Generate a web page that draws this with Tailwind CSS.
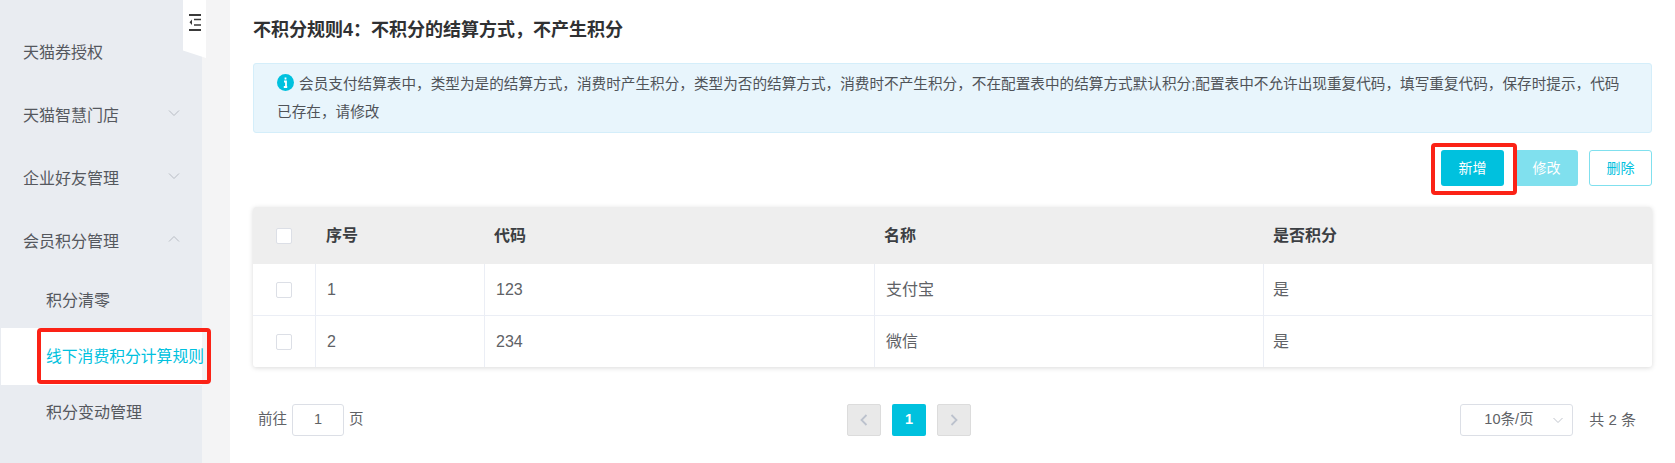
<!DOCTYPE html>
<html lang="zh-CN">

<head>
    <meta charset="UTF-8">
    <title>不积分规则</title>
    <script src="https://cdn.jsdelivr.net/npm/@tailwindcss/browser@4"></script>
</head>

<body>
    <main class="relative flex h-[463px] w-[1675px] overflow-hidden bg-white font-['Liberation_Sans','Noto_Sans_CJK_SC',sans-serif] text-[#606266]">
        <!-- sidebar -->
        <aside class="relative w-[202px] shrink-0 bg-[#e9ecf1] pt-[22px] text-[16px] text-[#55585e]">
            <div class="flex h-[62px] items-center pl-[23px]">天猫券授权</div>
            <div class="flex h-[64px] items-center justify-between pl-[23px] pr-[22px]">天猫智慧门店
                <svg class="mt-[-6px] h-[12px] w-[12px] text-[#b8bcc4]" viewBox="0 0 12 12" fill="none" stroke="currentColor"><path d="M1 3.500l5 5 5-5" /></svg>
            </div>
            <div class="flex h-[62px] items-center justify-between pl-[23px] pr-[22px]">企业好友管理
                <svg class="mt-[-6px] h-[12px] w-[12px] text-[#b8bcc4]" viewBox="0 0 12 12" fill="none" stroke="currentColor"><path d="M1 3.500l5 5 5-5" /></svg>
            </div>
            <div class="flex h-[63px] items-center justify-between pl-[23px] pr-[22px]">会员积分管理
                <svg class="mt-[-6px] h-[12px] w-[12px] text-[#b8bcc4]" viewBox="0 0 12 12" fill="none" stroke="currentColor"><path d="M1 8.500l5-5 5 5" /></svg>
            </div>
            <div class="flex h-[55px] items-center pl-[46px]">积分清零</div>
            <div class="ml-[1px] flex h-[57px] items-center whitespace-nowrap bg-white pl-[45px] text-[15.800px] text-[#00c1de]">线下消费积分计算规则</div>
            <div class="flex h-[55px] items-center pl-[46px]">积分变动管理</div>
        </aside>

        <!-- collapse toggle -->
        <div class="absolute left-[183px] top-0 flex h-[58px] w-[23px] justify-center bg-white pt-[14px] [clip-path:polygon(0_0,100%_0,100%_100%,0_87%)]">
            <svg class="h-[17px] w-[12px] text-[#3a3a3a]" viewBox="0 0 12 17" fill="none" stroke="currentColor">
                <path d="M0 1h12M0 16h12" stroke-width="2" />
                <path d="M5 5.500h7M5 11h7" stroke-width="1.500" />
                <path d="M3 5.500L.5 8.250 3 11z" fill="currentColor" stroke="none" />
            </svg>
        </div>

        <div class="w-[28px] shrink-0 bg-[#f4f4f5]"></div>

        <!-- content -->
        <section class="flex min-w-0 flex-1 flex-col pl-[23px] pr-[23px]">
            <h2 class="mt-[19px] h-[23px] text-[18px] font-bold leading-[23px] text-[#303133]">不积分规则4：不积分的结算方式，不产生积分</h2>

            <div class="mt-[21px] h-[70px] rounded-[3px] border border-[#d4eefa] bg-[#e8f5fc] px-[23px] pt-[6px] text-[14.640px] leading-[28px] text-[#4f5358]">
                <svg class="mr-[1px] inline-block h-[17px] w-[17px] align-[-2px]" viewBox="0 0 17 17">
                    <circle cx="8.500" cy="8.500" r="8.500" fill="#00c1de" />
                    <path d="M8.500 3.500v2M7 7.500h2v5.500M6.800 13h3.400" stroke="#fff" stroke-width="1.800" fill="none" />
                </svg>
                会员支付结算表中，类型为是的结算方式，消费时产生积分，类型为否的结算方式，消费时不产生积分，不在配置表中的结算方式默认积分;配置表中不允许出现重复代码，填写重复代码，保存时提示，代码已存在，请修改
            </div>

            <div class="mt-[17px] flex h-[36px] justify-end text-[14px]">
                <button class="h-[36px] w-[63px] rounded-[3px] bg-[#00c1de] text-white">新增</button>
                <button class="ml-[11px] h-[36px] w-[63px] rounded-[3px] bg-[#80e0ee] text-white">修改</button>
                <button class="ml-[11px] h-[36px] w-[63px] rounded-[3px] border border-[#80e0ee] bg-white text-[#00c1de]">删除</button>
            </div>

            <!-- table -->
            <div class="mt-[21px] rounded-[3px] shadow-[0_1px_5px_rgba(0,0,0,0.15)]">
                <div class="grid h-[57px] grid-cols-[63px_169px_390px_389px_1fr] items-center rounded-t-[3px] bg-[#eeeeee] text-[16px] font-bold text-[#3c3f43]">
                    <div class="flex pl-[23px]"><span class="h-[16px] w-[16px] rounded-[2px] border border-[#dcdfe6] bg-white"></span></div>
                    <div class="pl-[10px]">序号</div>
                    <div class="pl-[9px]">代码</div>
                    <div class="pl-[9px]">名称</div>
                    <div class="pl-[9px]">是否积分</div>
                </div>
                <div class="grid h-[52px] grid-cols-[63px_169px_390px_389px_1fr] border-b border-[#ebeef5] text-[16px]">
                    <div class="flex items-center border-r border-[#ebeef5] pl-[23px]"><span class="h-[16px] w-[16px] rounded-[2px] border border-[#dcdfe6] bg-white"></span></div>
                    <div class="flex items-center border-r border-[#ebeef5] pl-[11px]">1</div>
                    <div class="flex items-center border-r border-[#ebeef5] pl-[11px]">123</div>
                    <div class="flex items-center border-r border-[#ebeef5] pl-[11px]">支付宝</div>
                    <div class="flex items-center pl-[9px]">是</div>
                </div>
                <div class="grid h-[51px] grid-cols-[63px_169px_390px_389px_1fr] text-[16px]">
                    <div class="flex items-center border-r border-[#ebeef5] pl-[23px]"><span class="h-[16px] w-[16px] rounded-[2px] border border-[#dcdfe6] bg-white"></span></div>
                    <div class="flex items-center border-r border-[#ebeef5] pl-[11px]">2</div>
                    <div class="flex items-center border-r border-[#ebeef5] pl-[11px]">234</div>
                    <div class="flex items-center border-r border-[#ebeef5] pl-[11px]">微信</div>
                    <div class="flex items-center pl-[9px]">是</div>
                </div>
            </div>

            <!-- pagination -->
            <div class="mt-[37px] grid h-[32px] grid-cols-[594px_auto_1fr] items-center text-[14.500px]">
                <div class="flex items-center pl-[5px]">前往
                    <span class="mx-[5px] flex h-[32px] w-[52px] items-center justify-center rounded-[3px] border border-[#dcdfe6]">1</span>页
                </div>
                <div class="flex items-center gap-[11px]">
                    <span class="flex h-[32px] w-[34px] items-center justify-center rounded-[2px] border border-[#dcdcdc] bg-[#e9e9e9]">
                        <svg class="h-[12px] w-[8px] text-[#bcc2cd]" viewBox="0 0 8 12" fill="none" stroke="currentColor" stroke-width="1.800"><path d="M6.500 1l-5 5 5 5" /></svg>
                    </span>
                    <span class="flex h-[32px] w-[34px] items-center justify-center rounded-[2px] bg-[#00c1de] font-bold text-white">1</span>
                    <span class="flex h-[32px] w-[34px] items-center justify-center rounded-[2px] border border-[#dcdcdc] bg-[#e9e9e9]">
                        <svg class="h-[12px] w-[8px] text-[#bcc2cd]" viewBox="0 0 8 12" fill="none" stroke="currentColor" stroke-width="1.800"><path d="M1.500 1l5 5-5 5" /></svg>
                    </span>
                </div>
                <div class="flex items-center justify-end pr-[16px]">
                    <span class="flex h-[32px] w-[113px] items-center justify-between rounded-[3px] border border-[#dcdfe6] pl-[23px] pr-[9px]">10条/页
                        <svg class="h-[10px] w-[10px] text-[#c0c4cc]" viewBox="0 0 10 10" fill="none" stroke="currentColor"><path d="M.5 3l4.500 4.500L9.500 3" /></svg>
                    </span>
                    <span class="ml-[16px] text-[15px]">共 2 条</span>
                </div>
            </div>
        </section>

        <!-- red annotation boxes -->
        <div class="absolute left-[37px] top-[328px] h-[56px] w-[174px] rounded-[4px] border-[4px] border-[#fb2216]"></div>
        <div class="absolute left-[1431px] top-[143px] h-[52px] w-[86px] rounded-[4px] border-[4px] border-[#fb2216]"></div>
    </main>
</body>

</html>
